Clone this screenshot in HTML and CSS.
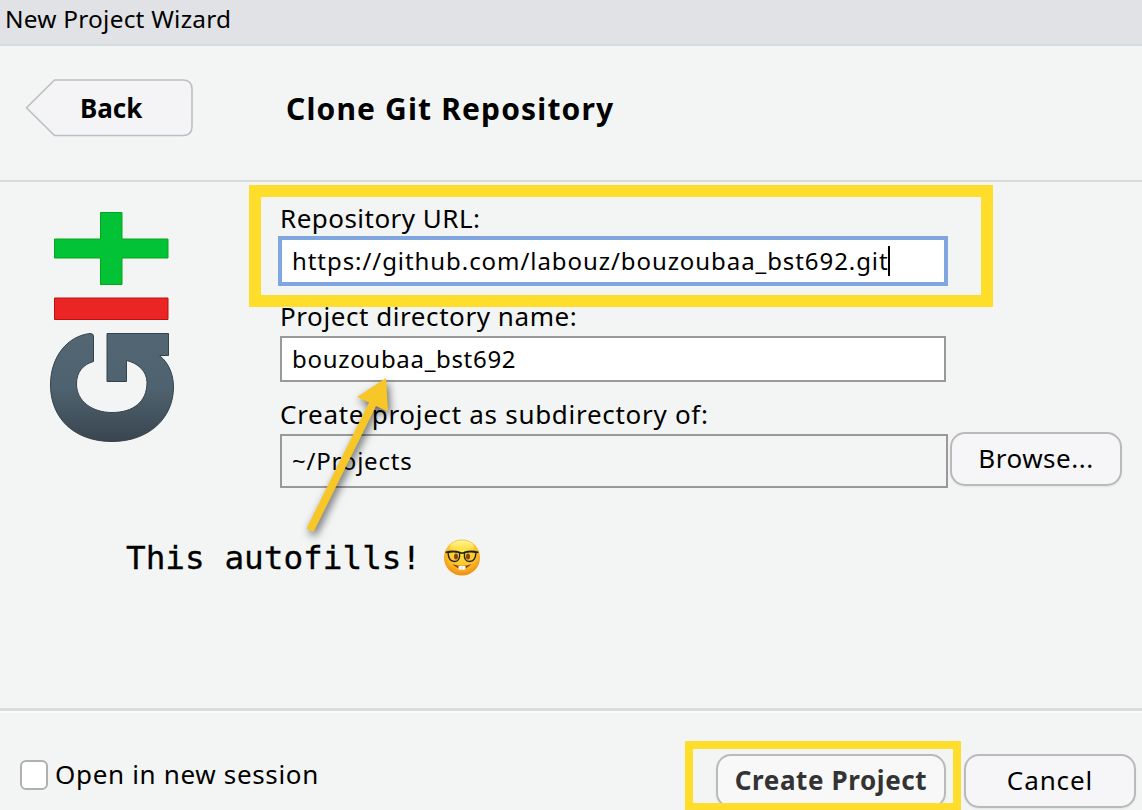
FILE: index.html
```html
<!DOCTYPE html>
<html lang="en">
<head>
<meta charset="utf-8">
<title>New Project Wizard</title>
<link rel="stylesheet" href="styles.css">
</head>
<body>
<div class="dialog">
  <div class="titlebar"><span class="titlebar-text">New Project Wizard</span></div>
  <header class="header">
    <button class="back" type="button">
      <svg class="back-shape" width="170" height="60" viewBox="0 0 170 60"><path d="M29.500 2H157.500Q167 2 167 11V48.500Q167 57.500 157.500 57.500H29.500L1.500 29.700Z" fill="#f4f4f7" stroke="#bdbfc0" stroke-width="1.600"/></svg>
      <span class="back-text">Back</span>
    </button>
    <h1 class="heading">Clone Git Repository</h1>
  </header>
  <main class="body">
    <svg class="logo" width="130" height="240" viewBox="0 0 130 240">
      <defs><linearGradient id="slate" x1="0" y1="0" x2="0" y2="1"><stop offset="0" stop-color="#526674"/><stop offset=".5" stop-color="#4f626f"/><stop offset="1" stop-color="#394650"/></linearGradient></defs>
      <path d="M53.500 5.500H75V32H121V51H75V77.500H53.500V51H7.500V32H53.500Z" fill="#02c236" stroke="#08a51a"/>
      <path d="M7.500 91H121V112.500H7.500Z" fill="#ea2524" stroke="#bd1013"/>
      <path d="M60 126.500H121.500V148.500H112.500C122 156 126.500 168 126.500 180C126.500 211 102 234.500 65 234.500C27 234.500 3.500 211 3.500 178C3.500 149 21 129 43 126.500Q46.500 126.500 46.500 129V154.500C36 157.500 29.500 165 29.500 177C29.500 194 45 205.500 65 205.500C86 205.500 100 195 100 175.500C100 164.500 91 156 79.500 153.500V174.500H60Z" fill="url(#slate)" stroke="#35434c"/>
    </svg>
    <div class="form">
      <label class="label l-url"><span>Repository URL:</span></label>
      <div class="field focused"><span class="v-url">https://github.com/labouz/bouzoubaa_bst692.git</span><i class="caret"></i></div>
      <label class="label l-dir"><span>Project directory name:</span></label>
      <div class="field"><span class="v-dir">bouzoubaa_bst692</span></div>
      <label class="label l-sub"><span>Create project as subdirectory of:</span></label>
      <div class="row">
        <div class="field readonly"><span class="v-sub">~/Projects</span></div>
        <button class="btn browse" type="button"><span>Browse...</span></button>
      </div>
    </div>
  </main>
  <footer class="footer">
    <label class="check"><i class="box"></i><span class="check-text">Open in new session</span></label>
    <div class="actions">
      <button class="btn create" type="button"><span>Create Project</span></button>
      <button class="btn cancel" type="button"><span>Cancel</span></button>
    </div>
  </footer>

  <div class="mark mark-url"></div>
  <div class="mark mark-create"></div>
  <svg class="arrow" width="130" height="190" viewBox="290 365 130 190"><path d="M386 378L388 411.500L376 406L313.500 532L306.500 528.500L369 402.500L357 397Z" fill="#f7c728"/></svg>
  <div class="note"><span class="note-text">This autofills!</span>
    <svg class="nerd" width="38" height="38" viewBox="0 0 38 38">
      <defs><radialGradient id="face" cx=".5" cy=".35" r=".65"><stop offset="0" stop-color="#ffe243"/><stop offset=".6" stop-color="#ffc42b"/><stop offset="1" stop-color="#ee8b12"/></radialGradient>
      <linearGradient id="shine" x1="0" y1="0" x2="0" y2="1"><stop offset="0" stop-color="#fff9a8"/><stop offset="1" stop-color="#fff04e" stop-opacity="0"/></linearGradient></defs>
      <circle cx="19" cy="18.500" r="18" fill="url(#face)"/>
      <ellipse cx="19" cy="8" rx="12" ry="6.500" fill="url(#shine)"/>
      <path d="M9.500 25Q19 35 28.500 25Q19 29 9.500 25Z" fill="#8b4312"/>
      <path d="M15.500 27H22.500V29.500Q22 31.500 19.300 30.500Q16 31.500 15.500 29.500Z" fill="#fff"/>
      <path d="M19 27.500V30.500" stroke="#bbb" stroke-width=".6"/>
      <ellipse cx="13" cy="17.500" rx="2" ry="3" fill="#85420c"/><ellipse cx="25" cy="17.500" rx="2" ry="3" fill="#85420c"/>
      <path d="M5 13.500Q10.500 11.700 16.500 13.500Q17.500 22.500 11.500 22.500Q5.500 22.500 5 13.500ZM21.500 13.500Q27.500 11.700 33 13.500Q32.500 22.500 26.500 22.500Q20.500 22.500 21.500 13.500Z" fill="none" stroke="#202521" stroke-width="1.400"/>
      <path d="M2.500 13.500Q10 11 17 13.700Q19 14.500 21 13.700Q28 11 35.500 13.500" fill="none" stroke="#202521" stroke-width="1.700"/>
    </svg>
  </div>
</div>
</body>
</html>
```
FILE: styles.css
```css
* { box-sizing: border-box; }
body { margin: 0; overflow: hidden; font-family: "Noto Sans", "Open Sans", sans-serif; color: #000; }
button { font: inherit; color: inherit; padding: 0; margin: 0; background: none; border: 0; }
span { white-space: pre; }
.dialog { position: relative; width: 1142px; height: 810px; overflow: hidden; background: #f3f5f4; display: flex; flex-direction: column; }

.titlebar { height: 46px; flex: none; background: #e1e2e6; border-bottom: 2px solid #d5dcdc; padding-left: 5px; font-size: 24.4px; line-height: 38px; }
.titlebar-text { letter-spacing: .24px; }

.header { height: 136px; flex: none; display: flex; border-bottom: 2px solid #dadcdc; padding: 32px 0 0 25px; }
.back { width: 170px; height: 60px; display: grid; }
.back-shape, .back-text { grid-area: 1 / 1; }
.back-text { font-size: 26px; font-weight: 700; line-height: 61px; text-align: left; padding-left: 55px; }
.heading { margin: 0 0 0 91px; font-size: 30px; font-weight: 700; line-height: 62px; letter-spacing: 1.15px; white-space: pre; }

.body { height: 526px; flex: none; display: flex; padding: 25px 0 0 47px; }
.logo { flex: none; }
.form { margin-left: 101px; display: flex; flex-direction: column; width: 848px; margin-top: -7px; }
.label { height: 36px; padding-left: 2px; font-size: 26px; line-height: 36px; }
.field { margin-left: 2px; width: 666px; height: 46px; border: 2px solid #999; background: #fff; padding-left: 10px; font-size: 24px; line-height: 42px; display: flex; align-items: center; flex: none; }
.focused { margin-left: 0; width: 670px; height: 50px; border: 4px solid #80a6df; }
.caret { width: 2px; height: 30px; margin-left: -1px; background: #000; }
.l-url { letter-spacing: .47px; }
.l-dir { height: 50px; line-height: 60px; letter-spacing: .57px; }
.l-sub { height: 52px; line-height: 64px; letter-spacing: .71px; }
.v-url { letter-spacing: .93px; }
.v-dir { letter-spacing: .69px; }
.v-sub { letter-spacing: .8px; }
.row { display: flex; gap: 2px; }
.readonly { width: 668px; height: 54px; background: #f3f5f4; }
.btn { border: 2px solid #bababa; border-radius: 15px; background: #f6f6f9; font-size: 26px; height: 54px; line-height: 48px; display: flex; justify-content: center; align-items: flex-start; box-shadow: 0 1px 2px #e3e5e5; }
.browse { width: 172px; margin-top: -2px; letter-spacing: .5px; }

.footer { flex: 1; display: flex; justify-content: space-between; border-top: 3px solid #d9dada; box-shadow: inset 0 2px #fcfcfc; padding: 43px 6px 0 20px; }
.check { display: flex; padding-top: 6px; font-size: 26px; }
.box { width: 28px; height: 30px; border: 2px solid #b0b0b0; border-radius: 6px; background: #fff; }
.check-text { line-height: 28px; margin-left: 7px; letter-spacing: .67px; }
.actions { display: flex; gap: 18px; }
.create { width: 230px; font-weight: 700; color: #333; background: #f8f8f8; letter-spacing: .6px; }
.cancel { width: 172px; letter-spacing: .9px; }

.mark { position: absolute; border: 12px solid #ffdd2b; }
.mark-url { left: 249px; top: 185px; width: 744px; height: 122px; }
.mark-create { left: 685px; top: 741px; width: 276px; height: 70px; border-width: 8px; }
.arrow { position: absolute; left: 290px; top: 365px; filter: drop-shadow(2px 4px 4px rgba(0, 0, 0, .6)); }
.note { position: absolute; left: 126px; top: 537px; display: flex; align-items: center; gap: 22px; height: 41px; font-family: "DejaVu Sans Mono", monospace; font-size: 32.7px; line-height: 41px; }
.note-text { padding-top: 1px; -webkit-text-stroke: .3px #000; }
```
